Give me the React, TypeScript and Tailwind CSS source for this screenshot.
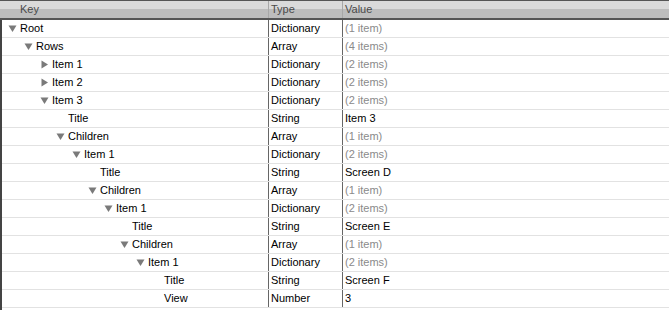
import React from "react";

type Row = { key: string; level: number; tri?: "down" | "right"; type: string; value: string; muted?: boolean };

const rows: Row[] = [
  { key: "Root", level: 0, tri: "down", type: "Dictionary", value: "(1 item)", muted: true },
  { key: "Rows", level: 1, tri: "down", type: "Array", value: "(4 items)", muted: true },
  { key: "Item 1", level: 2, tri: "right", type: "Dictionary", value: "(2 items)", muted: true },
  { key: "Item 2", level: 2, tri: "right", type: "Dictionary", value: "(2 items)", muted: true },
  { key: "Item 3", level: 2, tri: "down", type: "Dictionary", value: "(2 items)", muted: true },
  { key: "Title", level: 3, type: "String", value: "Item 3" },
  { key: "Children", level: 3, tri: "down", type: "Array", value: "(1 item)", muted: true },
  { key: "Item 1", level: 4, tri: "down", type: "Dictionary", value: "(2 items)", muted: true },
  { key: "Title", level: 5, type: "String", value: "Screen D" },
  { key: "Children", level: 5, tri: "down", type: "Array", value: "(1 item)", muted: true },
  { key: "Item 1", level: 6, tri: "down", type: "Dictionary", value: "(2 items)", muted: true },
  { key: "Title", level: 7, type: "String", value: "Screen E" },
  { key: "Children", level: 7, tri: "down", type: "Array", value: "(1 item)", muted: true },
  { key: "Item 1", level: 8, tri: "down", type: "Dictionary", value: "(2 items)", muted: true },
  { key: "Title", level: 9, type: "String", value: "Screen F" },
  { key: "View", level: 9, type: "Number", value: "3" },
];

function Tri({ dir }: { dir: "down" | "right" }) {
  return (
    <svg width="9" height="9" viewBox="0 0 9 9" className="shrink-0">
      {dir === "down" ? (
        <polygon points="0.5,1.5 8.5,1.5 4.5,8" fill="#7a7a7a" />
      ) : (
        <polygon points="1.5,0.5 8,4.5 1.5,8.5" fill="#7a7a7a" />
      )}
    </svg>
  );
}

export default function App() {
  return (
    <div
      className="w-[669px] h-[310px] bg-white overflow-hidden text-[11px] text-black"
      style={{ fontFamily: '"Liberation Sans", Arial, sans-serif' }}
    >
      <div className="flex h-[20px] border-t border-b-2 border-[#555] bg-[linear-gradient(#dadada_0,#dadada_47%,#bdbdbd_47%,#bdbdbd_100%)] text-[#4a4a4a]">
        <div className="w-[269px] border-r border-[#a8a8a8] pl-[20px] flex items-center">Key</div>
        <div className="w-[74px] border-r border-[#a8a8a8] pl-[2px] flex items-center">Type</div>
        <div className="flex-1 pl-[2px] flex items-center">Value</div>
      </div>
      <div className="border-l-2 border-[#444] h-[290px]">
        {rows.map((r, i) => (
          <div key={i} className="flex h-[18px] border-b border-[#e2e2e2]">
            <div className="w-[267px] border-r border-[#666] flex items-center" style={{ paddingLeft: 6 + 16 * r.level }}>
              <span className="w-[12px] flex items-center">{r.tri ? <Tri dir={r.tri} /> : null}</span>
              <span>{r.key}</span>
            </div>
            <div className="w-[74px] border-r border-[#666] pl-[2px] flex items-center">{r.type}</div>
            <div className={"flex-1 pl-[2px] flex items-center " + (r.muted ? "text-[#8a8a8a]" : "text-black")}>{r.value}</div>
          </div>
        ))}
      </div>
    </div>
  );
}
